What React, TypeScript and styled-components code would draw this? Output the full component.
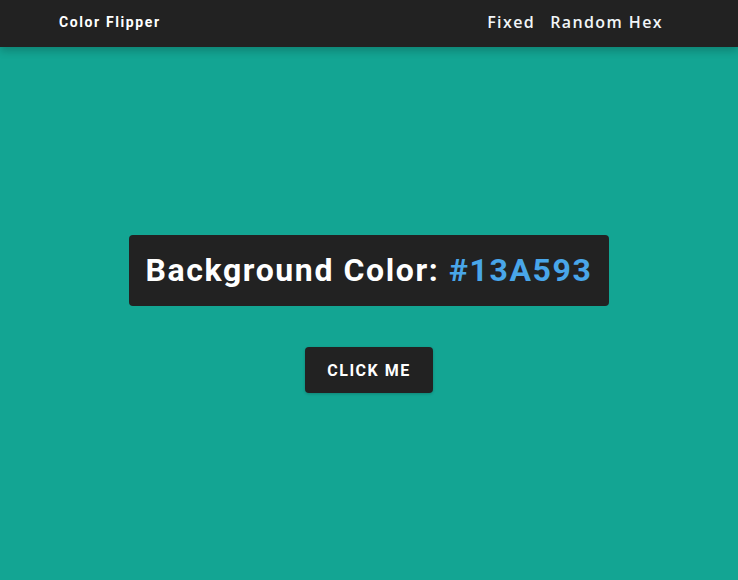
import React from "react";
import styled, { createGlobalStyle } from "styled-components";

const Global = createGlobalStyle`
  * { box-sizing: border-box; }
  html, body { margin: 0; padding: 0; }
  body { font-family: Roboto, "Liberation Sans", sans-serif; background: #13A593; }
`;

const Page = styled.div`
  min-height: 580px;
  display: flex;
  flex-direction: column;
  background: #13A593;
`;

const Nav = styled.nav`
  height: 47px;
  background: #222222;
  box-shadow: 0 4px 8px rgba(0, 0, 0, 0.2);
  display: flex;
  align-items: center;
  justify-content: space-between;
  padding: 0 75px 3px 59px;
  position: relative;
  z-index: 1;
`;

const Brand = styled.div`
  color: #ffffff;
  font-family: Roboto, sans-serif;
  font-weight: 700;
  font-size: 14px;
  letter-spacing: 1.6px;
`;

const Links = styled.ul`
  display: flex;
  gap: 15px;
  list-style: none;
  margin: 0;
  padding: 0;
`;

const LinkItem = styled.li`
  color: #f1f5f8;
  font-family: "Open Sans", sans-serif;
  font-size: 16px;
  font-weight: 600;
  letter-spacing: 1.4px;
`;

const Main = styled.main`
  flex: 1;
  display: flex;
  flex-direction: column;
  align-items: center;
  justify-content: center;
  padding-top: 1px;
`;

const Panel = styled.h2`
  margin: 0 0 41px;
  background: #222222;
  color: #ffffff;
  border-radius: 4px;
  padding: 16px 17px;
  font-family: Roboto, sans-serif;
  font-size: 32px;
  font-weight: 700;
  letter-spacing: 1.6px;
  line-height: 39px;
  min-height: 71px;
`;

const Hex = styled.span`
  color: #49a6e9;
`;

const Button = styled.button`
  background: #222222;
  color: #ffffff;
  border: none;
  border-radius: 4px;
  width: 128px;
  height: 46px;
  font-family: Roboto, sans-serif;
  font-weight: 700;
  font-size: 16px;
  letter-spacing: 1.5px;
  text-transform: uppercase;
  box-shadow: 0 1px 3px rgba(0, 0, 0, 0.2);
  cursor: pointer;
`;

export default function App() {
  return (
    <Page>
      <Global />
      <Nav>
        <Brand>Color Flipper</Brand>
        <Links>
          <LinkItem>Fixed</LinkItem>
          <LinkItem>Random Hex</LinkItem>
        </Links>
      </Nav>
      <Main>
        <Panel>
          Background Color: <Hex>#13A593</Hex>
        </Panel>
        <Button>click me</Button>
      </Main>
    </Page>
  );
}
